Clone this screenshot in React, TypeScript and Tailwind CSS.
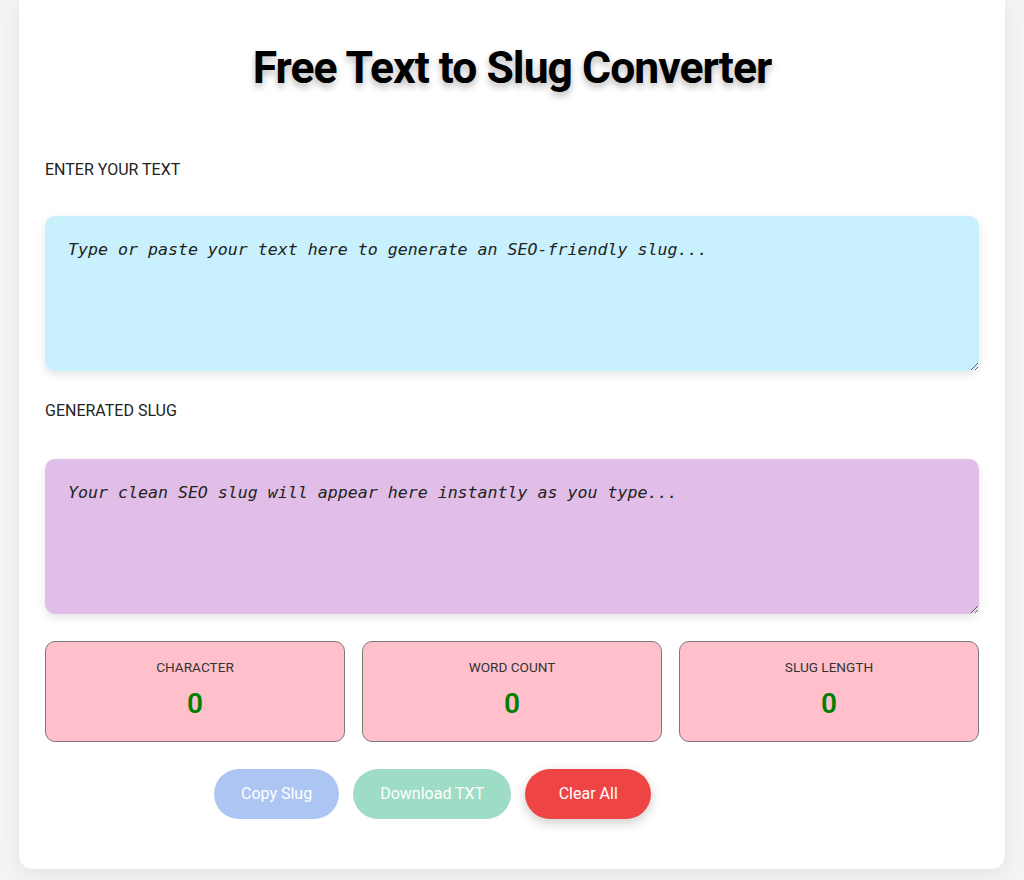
import { useState } from 'react'

function slugify(text: string) {
  return text
    .toLowerCase()
    .trim()
    .replace(/[^a-z0-9\s-]/g, '')
    .replace(/[\s_]+/g, '-')
    .replace(/-+/g, '-')
    .replace(/^-|-$/g, '')
}

function Stat({ label, value }: { label: string; value: number }) {
  return (
    <div className="flex h-[101px] flex-col items-center rounded-[10px] border border-[#7a7a7a] bg-[#ffc0cb] pt-[19px]">
      <span className="text-[13.6px] leading-none text-[#333]">{label}</span>
      <span className="mt-[15px] text-[28px] font-semibold leading-none text-[#008000]">{value}</span>
    </div>
  )
}

export default function App() {
  const [text, setText] = useState('')
  const slug = slugify(text)
  const words = text.trim() ? text.trim().split(/\s+/).length : 0
  const empty = slug.length === 0

  return (
    <div className="min-h-[880px] bg-[#f4f4f4] px-[19px] font-['Roboto',sans-serif]">
      <div className="rounded-b-[14px] bg-white px-[26px] pb-[50px] pt-[40px] shadow-[0_4px_20px_rgba(0,0,0,0.08)]">
        <h1 className="text-center text-[44.5px] font-bold leading-[56px] tracking-[-1px] text-black [text-shadow:0_4px_7px_rgba(0,0,0,0.28)]">
          Free Text to Slug Converter
        </h1>

        <label className="mt-[65px] block text-[16px] leading-[18px] text-[#222]">ENTER YOUR TEXT</label>
        <textarea
          value={text}
          onChange={(e) => setText(e.target.value)}
          placeholder="Type or paste your text here to generate an SEO-friendly slug..."
          className="mt-[37px] block h-[155px] w-full rounded-[10px] bg-[#c8f1fd] px-[23px] py-[22px] font-['DejaVu_Sans_Mono',monospace] text-[16.6px] italic text-black shadow-[0_4px_10px_rgba(0,0,0,0.1)] outline-none placeholder:text-[#222]"
        />

        <label className="mt-[31px] block text-[16px] leading-[18px] text-[#222]">GENERATED SLUG</label>
        <textarea
          readOnly
          value={slug}
          placeholder="Your clean SEO slug will appear here instantly as you type..."
          className="mt-[39px] block h-[155px] w-full rounded-[10px] bg-[#e1bee7] px-[23px] py-[22px] font-['DejaVu_Sans_Mono',monospace] text-[16.6px] italic text-black shadow-[0_4px_10px_rgba(0,0,0,0.1)] outline-none placeholder:text-[#222]"
        />

        <div className="mt-[27px] grid grid-cols-3 gap-[17px]">
          <Stat label="CHARACTER" value={text.length} />
          <Stat label="WORD COUNT" value={words} />
          <Stat label="SLUG LENGTH" value={slug.length} />
        </div>

        <div className="mt-[27px] flex gap-[14px] pl-[169px]">
          <button
            disabled={empty}
            onClick={() => navigator.clipboard?.writeText(slug)}
            className="h-[50px] rounded-full bg-[#5d8de6] px-[27px] text-[16px] text-white disabled:opacity-50"
          >
            Copy Slug
          </button>
          <button
            disabled={empty}
            className="h-[50px] rounded-full bg-[#3fba8e] px-[27px] text-[16px] text-white disabled:opacity-50"
          >
            Download TXT
          </button>
          <button
            onClick={() => setText('')}
            className="h-[50px] rounded-full bg-[#ef4444] px-[33.5px] text-[16px] text-white shadow-[0_4px_12px_rgba(0,0,0,0.2)]"
          >
            Clear All
          </button>
        </div>
      </div>
    </div>
  )
}
